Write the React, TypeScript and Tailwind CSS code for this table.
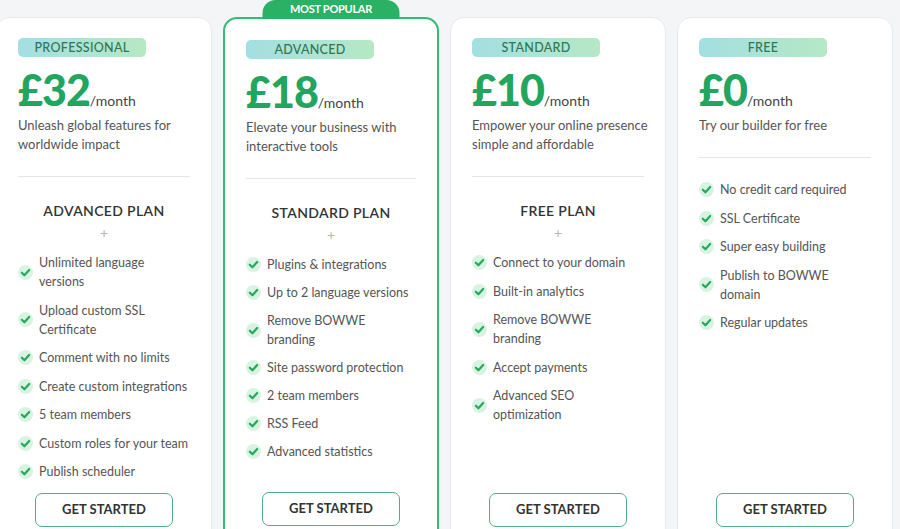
import React from "react";

type Plan = {
  tag: string;
  price: string;
  desc: string[];
  heading?: string;
  features: string[][];
  popular?: boolean;
};

const plans: Plan[] = [
  {
    tag: "PROFESSIONAL",
    price: "£32",
    desc: ["Unleash global features for", "worldwide impact"],
    heading: "ADVANCED PLAN",
    features: [
      ["Unlimited language", "versions"],
      ["Upload custom SSL", "Certificate"],
      ["Comment with no limits"],
      ["Create custom integrations"],
      ["5 team members"],
      ["Custom roles for your team"],
      ["Publish scheduler"],
    ],
  },
  {
    tag: "ADVANCED",
    price: "£18",
    desc: ["Elevate your business with", "interactive tools"],
    heading: "STANDARD PLAN",
    popular: true,
    features: [
      ["Plugins & integrations"],
      ["Up to 2 language versions"],
      ["Remove BOWWE", "branding"],
      ["Site password protection"],
      ["2 team members"],
      ["RSS Feed"],
      ["Advanced statistics"],
    ],
  },
  {
    tag: "STANDARD",
    price: "£10",
    desc: ["Empower your online presence", "simple and affordable"],
    heading: "FREE PLAN",
    features: [
      ["Connect to your domain"],
      ["Built-in analytics"],
      ["Remove BOWWE", "branding"],
      ["Accept payments"],
      ["Advanced SEO", "optimization"],
    ],
  },
  {
    tag: "FREE",
    price: "£0",
    desc: ["Try our builder for free"],
    features: [
      ["No credit card required"],
      ["SSL Certificate"],
      ["Super easy building"],
      ["Publish to BOWWE", "domain"],
      ["Regular updates"],
    ],
  },
];

const Check = () => (
  <span className="w-[15px] h-[15px] shrink-0 rounded-full bg-[#d9f3e1] flex items-center justify-center">
    <svg width="11" height="11" viewBox="0 0 12 12" fill="none">
      <path
        d="M2 6.3 L4.8 9 L10 3.3"
        stroke="#27a85f"
        strokeWidth="2.4"
        strokeLinecap="round"
        strokeLinejoin="round"
      />
    </svg>
  </span>
);

const Features = ({ items, top, gap }: { items: string[][]; top: string; gap: string }) => (
  <ul className={`${top} ${gap} flex flex-col`}>
    {items.map((f, i) => (
      <li key={i} className="flex items-center gap-[6px]">
        <Check />
        <span className="text-[12.5px] leading-[19px] text-[#555]">
          {f.map((l, j) => (
            <span key={j} className="block whitespace-nowrap">
              {l}
            </span>
          ))}
        </span>
      </li>
    ))}
  </ul>
);

const Card = ({ plan }: { plan: Plan }) => {
  return (
    <div
      className={
        plan.popular
          ? "relative w-[216px] h-[530px] shrink-0 bg-white rounded-[14px] border-2 border-[#34bd72] flex flex-col px-[21px] pt-[21px] pb-[19px]"
          : "relative w-[216px] h-[530px] shrink-0 bg-white rounded-[14px] border border-[#e7e9ec] flex flex-col px-[21px] pt-[20px] pb-[19px]"
      }
    >
      {plan.popular && (
        <div className="absolute -top-[19px] left-1/2 -translate-x-1/2 w-[137px] h-[19px] rounded-t-[13px] bg-[#2bb166] flex items-center justify-center text-white text-[11px] font-bold tracking-tight">
          MOST POPULAR
        </div>
      )}

      <div className="w-[128px] h-[19px] pt-[2px] rounded-[5px] bg-gradient-to-r from-[#a3dfe2] to-[#b6e8c4] flex items-center justify-center text-[12.5px] font-medium text-[#2d7658] tracking-wide">
        {plan.tag}
      </div>

      <div className="mt-[11px] flex items-baseline">
        <span className="text-[43px] leading-none font-black text-[#22a55e] tracking-[-1px]">
          {plan.price}
        </span>
        <span className="text-[14px] text-[#444]">/month</span>
      </div>

      <p className="mt-[5px] text-[13px] leading-[19px] text-[#555]">
        {plan.desc.map((d, i) => (
          <span key={i} className="block whitespace-nowrap">
            {d}
          </span>
        ))}
      </p>

      <div className="mt-[22px] h-px bg-[#e3e5e8]" />

      {plan.heading ? (
        <>
          <h3 className="mt-[24px] text-center text-[14px] leading-[20px] font-semibold text-[#333] tracking-wide">
            {plan.heading}
          </h3>
          <div className="mt-[3px] text-center text-[14px] leading-[18px] text-[#b5b5b5]">+</div>
          <Features
            items={plan.features}
            top="mt-[11px]"
            gap={plan.popular ? "gap-[9px]" : "gap-[9.5px]"}
          />
        </>
      ) : (
        <Features items={plan.features} top="mt-[22px]" gap="gap-[9.5px]" />
      )}

      <button className="mt-auto mx-auto w-[138px] h-[34px] rounded-[7px] border border-[#4fae86] bg-white text-[13px] font-bold text-[#333]">
        GET STARTED
      </button>
    </div>
  );
};

export default function App() {
  return (
    <div
      className="w-full h-[529px] overflow-hidden bg-[#f4f5f7]"
      style={{ fontFamily: "Lato, 'Noto Sans', sans-serif" }}
    >
      <div className="flex gap-[11px] ml-[-4px] pt-[17px]">
        {plans.map((p) => (
          <Card key={p.tag} plan={p} />
        ))}
      </div>
    </div>
  );
}
